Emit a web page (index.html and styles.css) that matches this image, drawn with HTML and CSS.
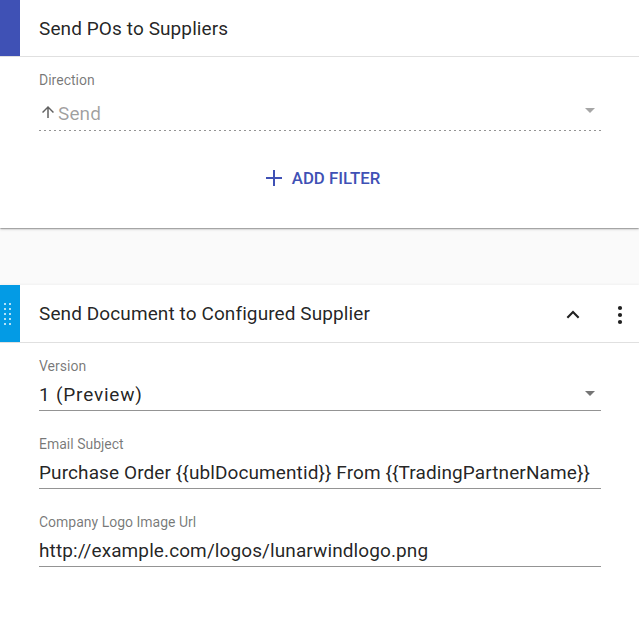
FILE: index.html
```html
<!DOCTYPE html>
<html>
<head>
<meta charset="utf-8">
<link rel="stylesheet" href="styles.css">
</head>
<body>
  <section class="card card-top">
    <header class="card-header">
      <div class="accent accent-indigo"></div>
      <h2 class="card-title">Send POs to Suppliers</h2>
    </header>
    <div class="card-body">
      <div class="field field-disabled">
        <div class="field-label">Direction</div>
        <div class="field-row field-row-tall">
          <svg class="dir-icon" viewBox="0 0 24 24" width="18" height="18"><path d="M4 12l1.41 1.41L11 7.83V20h2V7.83l5.58 5.59L20 12l-8-8-8 8z" fill="#616161"/></svg>
          <span class="field-value muted">Send</span>
          <svg class="drop-icon" viewBox="0 0 24 24" width="24" height="24"><path d="M7 10l5 5 5-5z" fill="#a6a6a6"/></svg>
        </div>
      </div>
      <div class="actions">
        <button class="add-btn">
          <svg viewBox="0 0 20 20" width="20" height="20"><path d="M9 2h2v7h7v2h-7v7H9v-7H2V9h7z" fill="#3f51b5"/></svg>
          <span>ADD FILTER</span>
        </button>
      </div>
    </div>
  </section>

  <section class="card card-bottom">
    <header class="card-header">
      <div class="accent accent-blue">
        <div class="grip">
          <i></i><i></i><i></i><i></i><i></i><i></i><i></i><i></i><i></i><i></i>
        </div>
      </div>
      <h2 class="card-title">Send Document to Configured Supplier</h2>
      <div class="header-icons">
        <svg viewBox="0 0 24 24" width="24" height="24"><path d="M12 7.6l-6.4 6.4 1.5 1.5L12 10.6l4.9 4.9 1.5-1.5z" fill="#212121"/></svg>
        <svg viewBox="0 0 24 24" width="24" height="24"><circle cx="12" cy="5" r="2.1" fill="#212121"/><circle cx="12" cy="12" r="2.1" fill="#212121"/><circle cx="12" cy="19" r="2.1" fill="#212121"/></svg>
      </div>
    </header>
    <div class="card-body card-body-fields">
      <div class="field">
        <div class="field-label">Version</div>
        <div class="field-row solid">
          <span class="field-value spaced">1 (Preview)</span>
          <svg class="drop-icon drop-icon-dark" viewBox="0 0 24 24" width="24" height="24"><path d="M7 10l5 5 5-5z" fill="#757575"/></svg>
        </div>
      </div>
      <div class="field">
        <div class="field-label">Email Subject</div>
        <div class="field-row solid">
          <span class="field-value">Purchase Order {{ublDocumentid}} From {{TradingPartnerName}}</span>
        </div>
      </div>
      <div class="field">
        <div class="field-label">Company Logo Image Url</div>
        <div class="field-row solid">
          <span class="field-value">http://example.com/logos/lunarwindlogo.png</span>
        </div>
      </div>
    </div>
  </section>
</body>
</html>
```

FILE: styles.css
```css
* { box-sizing: border-box; }

html, body {
  margin: 0;
  padding: 0;
}

body {
  background: #fafafa;
  font-family: Roboto, "Noto Sans", "Liberation Sans", sans-serif;
  color: rgba(0, 0, 0, 0.87);
  width: 639px;
  height: 618px;
  overflow: hidden;
}

.card {
  background: #fff;
}

.card-top {
  height: 228px;
  box-shadow: 0 1px 3px rgba(0, 0, 0, 0.2), 0 1px 1px rgba(0, 0, 0, 0.14), 0 2px 1px -1px rgba(0, 0, 0, 0.12);
  margin-bottom: 57px;
}

.card-bottom {
  height: 333px;
  box-shadow: 0 -1px 2px rgba(0, 0, 0, 0.04);
}

.card-header {
  display: flex;
  align-items: stretch;
  height: 57px;
  border-bottom: 1px solid #e0e0e0;
}

.card-bottom .card-header {
  height: 58px;
}

.accent {
  width: 20px;
  flex: none;
}

.accent-indigo { background: #3f51b5; }

.accent-blue {
  background: #039be5;
  display: flex;
  align-items: center;
  padding-left: 4px;
}

.grip {
  display: grid;
  grid-template-columns: 2px 2px;
  grid-auto-rows: 2px;
  column-gap: 3px;
  row-gap: 3px;
}

.grip i {
  display: block;
  width: 2px;
  height: 2px;
  background: rgba(255, 255, 255, 0.7);
}

.card-title {
  flex: 1;
  margin: 0;
  padding-left: 19px;
  padding-top: 1px;
  font-size: 19px;
  font-weight: 400;
  letter-spacing: 0.1px;
  line-height: 56px;
  color: rgba(0, 0, 0, 0.87);
}

.header-icons {
  display: flex;
  align-items: center;
  gap: 23px;
  padding-right: 7px;
  padding-top: 2px;
}

.header-icons svg { display: block; }

.card-body {
  padding: 15px 38px 0 39px;
}

.card-body-fields {
  padding-top: 15px;
}

.field + .field {
  margin-top: 25px;
}

.field-label {
  font-size: 14px;
  line-height: 16px;
  color: rgba(0, 0, 0, 0.54);
}

.field-row {
  display: flex;
  align-items: center;
  padding-top: 7px;
  padding-bottom: 2px;
  height: 37px;
}

.field-row.solid {
  border-bottom: 1px solid rgba(0, 0, 0, 0.42);
}

.field-row-tall {
  padding-top: 12px;
  padding-bottom: 4px;
  height: 43px;
  padding-right: 2px;
  background-image: linear-gradient(to right, rgba(0, 0, 0, 0.42) 0%, rgba(0, 0, 0, 0.42) 40%, transparent 40%);
  background-size: 5px 1px;
  background-repeat: repeat-x;
  background-position: left bottom;
}

.field-value {
  flex: 1;
  font-size: 19px;
  line-height: 26px;
  letter-spacing: 0.1px;
  white-space: nowrap;
}

.field-value.spaced {
  letter-spacing: 0.8px;
}

.field-value.muted {
  color: rgba(0, 0, 0, 0.38);
}

.dir-icon {
  flex: none;
  margin-top: -4px;
  margin-right: 1px;
}

.drop-icon {
  flex: none;
  margin-top: -8px;
  margin-right: -3px;
}

.drop-icon-dark {
  margin-top: -3px;
  margin-right: -1px;
}

.actions {
  display: flex;
  justify-content: center;
  margin-top: 29px;
}

.add-btn {
  display: flex;
  align-items: center;
  gap: 8px;
  height: 36px;
  padding: 0 8px;
  border: 0;
  background: transparent;
  font-family: Roboto, "Noto Sans", "Liberation Sans", sans-serif;
  font-size: 16.8px;
  font-weight: 500;
  color: #3f51b5;
  margin-left: 4px;
}

.add-btn svg { display: block; }
```
